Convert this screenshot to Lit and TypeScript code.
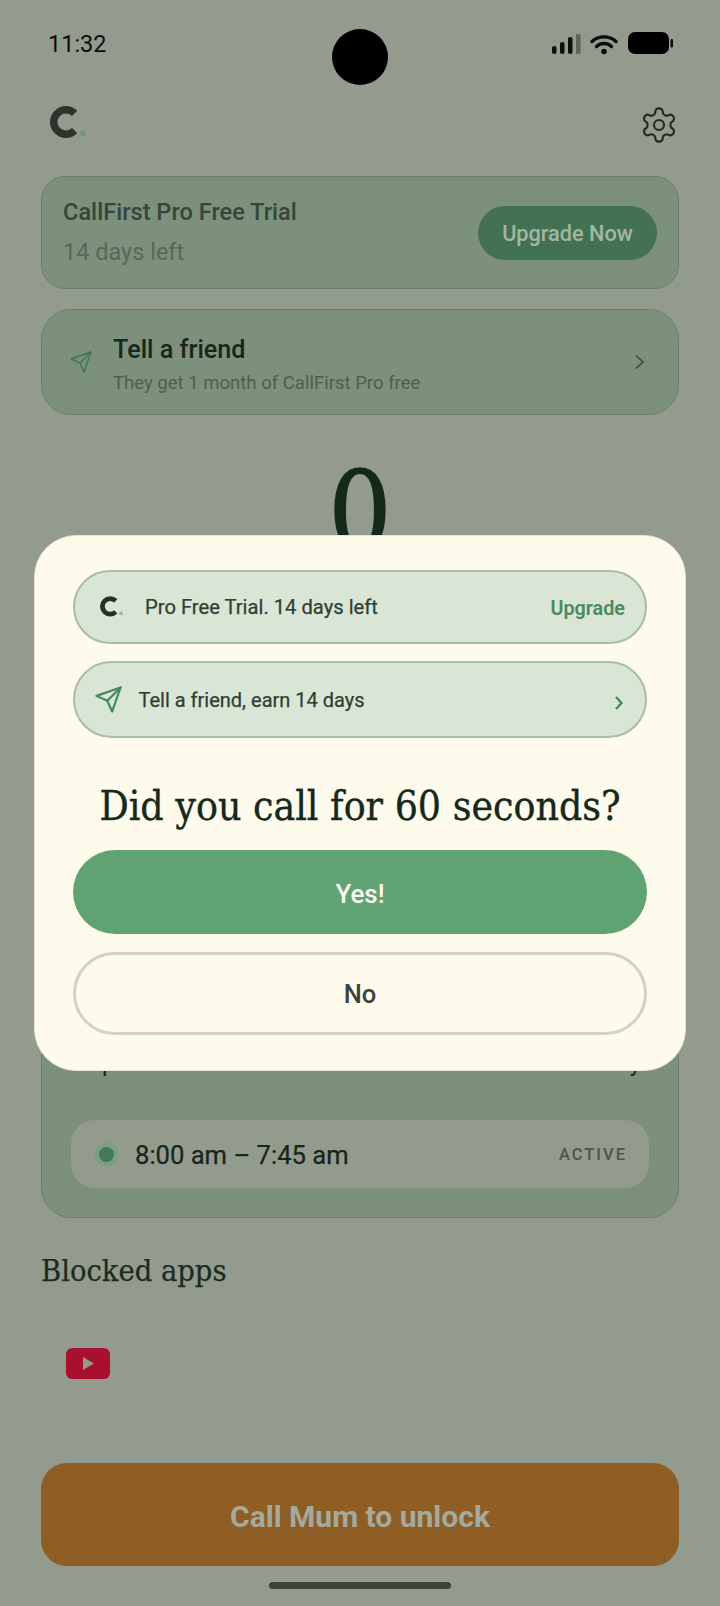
import { LitElement, html, css, svg } from 'lit';
import { customElement } from 'lit/decorators.js';

const logo = (cls: string, dot: string) => html`
  <svg class=${cls} viewBox="0 0 36 34" fill="none">
    <path d="M24.66 7.34A12.25 12.25 0 1 0 24.66 24.66" stroke="currentColor" stroke-width="7.5"></path>
    <circle cx="33" cy="27" r="3" fill=${dot}></circle>
  </svg>
`;

const sendIcon = (cls: string, width: number) => html`
  <svg class=${cls} viewBox="0 0 24 24" fill="none" stroke="currentColor" stroke-width=${width} stroke-linejoin="round" stroke-linecap="round">
    ${svg`<path d="m22 2-7 20-4-9-9-4Z"></path><path d="M22 2 11 13"></path>`}
  </svg>
`;

@customElement('app-root')
export class AppRoot extends LitElement {
  static styles = css`
    :host {
      display: block;
      width: 720px;
      height: 1606px;
      font-family: Roboto, "Noto Sans", sans-serif;
    }

    .screen {
      position: relative;
      box-sizing: border-box;
      width: 720px;
      height: 1606px;
      padding: 31px 41px 0;
      display: flex;
      flex-direction: column;
      overflow: hidden;
      background: #939b8e;
    }

    .screen > * {
      flex: none;
    }

    .camera {
      position: absolute;
      left: 332px;
      top: 29px;
      width: 56px;
      height: 56px;
      border-radius: 50%;
      background: #000;
    }

    .status {
      height: 24px;
      padding: 0 6px 0 7px;
      display: flex;
      align-items: center;
      justify-content: space-between;
    }

    .time {
      padding-top: 2px;
      font-size: 23.5px;
      line-height: 24px;
      color: #0a0d0a;
    }

    .status-icons {
      width: 121px;
      height: 24px;
      display: block;
    }

    .header {
      margin-top: 50px;
      height: 40px;
      padding: 0 0 0 9px;
      display: flex;
      align-items: center;
      justify-content: space-between;
      color: #2c352d;
    }

    .logo {
      width: 36px;
      height: 34px;
      display: block;
      margin-top: -4px;
    }

    .gear {
      width: 40px;
      height: 40px;
      color: #222b24;
    }

    .card {
      box-sizing: border-box;
      border: 1px solid #6b8068;
      background: #7d907b;
    }

    .trial {
      margin-top: 31px;
      height: 113px;
      border-radius: 24px;
      padding: 0 21px;
      display: flex;
      align-items: center;
      justify-content: space-between;
    }

    .trial-text {
      padding-bottom: 2px;
    }

    .trial-title {
      font-size: 23.6px;
      line-height: 30px;
      font-weight: 500;
      color: #36463a;
    }

    .trial-left {
      margin-top: 10px;
      font-size: 23.5px;
      line-height: 30px;
      color: #55695a;
    }

    .upgrade-now {
      width: 179px;
      height: 54px;
      border-radius: 27px;
      padding-top: 2px;
      box-sizing: border-box;
      display: flex;
      align-items: center;
      justify-content: center;
      font-size: 21.7px;
      font-weight: 500;
      color: #a4b6a4;
      background: #427252;
    }

    .friend {
      margin-top: 20px;
      height: 106px;
      border-radius: 30px;
      padding: 0 31px 0 27px;
      display: flex;
      align-items: center;
      gap: 20px;
    }

    .friend-icon {
      width: 24px;
      height: 24px;
      color: #3f7550;
      flex: none;
    }

    .friend-text {
      flex: 1;
      padding-top: 6px;
    }

    .friend-title {
      font-size: 25.2px;
      line-height: 30px;
      font-weight: 500;
      color: #16281b;
    }

    .friend-sub {
      margin-top: 6px;
      font-size: 18.55px;
      line-height: 24px;
      color: #4e5f51;
    }

    .chevron {
      width: 14px;
      height: 18px;
      flex: none;
      color: #3c4c3e;
    }

    .count {
      margin-top: 37px;
      height: 113px;
      text-align: center;
      font-family: "DejaVu Serif", serif;
      font-stretch: condensed;
      font-size: 110px;
      line-height: 120px;
      -webkit-text-stroke: 1.5px #14291a;
      color: #14291a;
    }

    /* most of this card sits behind the dialog */
    .schedule {
      margin-top: 20px;
      height: 633px;
      border-radius: 30px;
      padding: 0 29px 29px;
      display: flex;
      flex-direction: column;
      justify-content: flex-end;
    }

    .peek {
      display: flex;
      justify-content: space-between;
      padding: 0 8px 0 31px;
      font-size: 24px;
      line-height: 30px;
      margin-bottom: 42px;
      color: #14291a;
    }

    .window {
      height: 68px;
      border-radius: 24px;
      padding: 0 22px 0 24px;
      display: flex;
      align-items: center;
      background: #939b8d;
    }

    .dot {
      box-sizing: border-box;
      width: 23px;
      height: 23px;
      border-radius: 50%;
      border: 4.5px solid #76a07f;
      background: #437a55;
      flex: none;
    }

    .window-time {
      margin-left: 17px;
      padding-top: 2px;
      flex: 1;
      font-size: 25.6px;
      -webkit-text-stroke: 0.25px #15271a;
      color: #15271a;
    }

    .active {
      font-size: 16.5px;
      font-weight: 500;
      letter-spacing: 2px;
      color: #48564b;
    }

    .blocked {
      margin-top: 35px;
      font-family: "DejaVu Serif", serif;
      font-stretch: condensed;
      font-size: 30.5px;
      line-height: 36px;
      -webkit-text-stroke: 0.25px #1b2c1f;
      color: #1b2c1f;
    }

    .yt {
      margin: 59px 0 0 25px;
      width: 44px;
      height: 32px;
      display: block;
    }

    .call {
      box-sizing: border-box;
      margin-top: 83px;
      height: 103px;
      border-radius: 26px;
      padding-top: 3px;
      display: flex;
      align-items: center;
      justify-content: center;
      font-size: 30px;
      font-weight: 700;
      color: #a3aa9e;
      background: #8e5e25;
    }

    .home-bar {
      margin: 16px auto 0;
      width: 182px;
      height: 7px;
      border-radius: 4px;
      background: #3c443a;
    }

    .dialog {
      position: absolute;
      left: 34px;
      top: 535px;
      box-sizing: border-box;
      width: 652px;
      height: 536px;
      padding: 34px 38px 35px;
      border: 1px solid #e9e5d3;
      border-radius: 42px;
      display: flex;
      flex-direction: column;
      background: #fefaec;
    }

    .pill {
      box-sizing: border-box;
      border: 2px solid #a9bda2;
      background: #d9e6d5;
      display: flex;
      align-items: center;
      color: #2f3e33;
      -webkit-text-stroke: 0.25px #2f3e33;
    }

    .pill-trial {
      height: 74px;
      border-radius: 37px;
      padding: 0 20px 0 25px;
      font-size: 20.2px;
    }

    .pill-logo {
      width: 23px;
      height: 22px;
      flex: none;
      color: #2a2f2b;
    }

    .pill-trial span {
      margin-left: 22px;
      flex: 1;
    }

    .pill-trial b {
      font-size: 19.8px;
      font-weight: 600;
      padding-top: 2px;
      -webkit-text-stroke: 0;
      color: #4a8a60;
    }

    .pill-friend {
      margin-top: 17px;
      height: 77px;
      border-radius: 38.5px;
      padding: 0 21px 0 18.5px;
      font-size: 20px;
    }

    .pill-send {
      width: 29px;
      height: 29px;
      flex: none;
      color: #438a5c;
    }

    .pill-friend span {
      margin-left: 16px;
      flex: 1;
    }

    .pill-chevron {
      width: 10px;
      height: 16px;
      margin-top: 6px;
      flex: none;
      color: #4a8a60;
    }

    h1 {
      margin: 44px 0 20px;
      font-family: "DejaVu Serif", serif;
      font-stretch: condensed;
      font-size: 40.6px;
      line-height: 48px;
      font-weight: 400;
      text-align: center;
      white-space: nowrap;
      -webkit-text-stroke: 0.35px #14291a;
      color: #14291a;
    }

    .yes, .no {
      box-sizing: border-box;
      display: flex;
      align-items: center;
      justify-content: center;
    }

    .yes {
      height: 84px;
      border-radius: 42px;
      padding-top: 3px;
      font-size: 26px;
      font-weight: 500;
      color: #fefaf0;
      background: #5fa373;
    }

    .no {
      margin-top: 18px;
      height: 83px;
      border-radius: 41.5px;
      padding-top: 1px;
      border: 3px solid #d6d1bf;
      font-size: 25.5px;
      font-weight: 500;
      color: #3a443c;
    }
  `;

  render() {
    return html`
      <div class="screen">
        <div class="camera"></div>

        <div class="status">
          <div class="time">11:32</div>
          <svg class="status-icons" viewBox="0 0 121 24">
            <rect x="0" y="15" width="4.5" height="8" rx="2" fill="#0a0d0a"></rect>
            <rect x="8" y="11" width="4.5" height="12" rx="2" fill="#0a0d0a"></rect>
            <rect x="16" y="6" width="4.5" height="17" rx="2" fill="#0a0d0a"></rect>
            <rect x="24" y="3" width="4.5" height="20" rx="1" fill="#5d655c"></rect>
            <path d="M40 10.5a18 18 0 0 1 24 0M44.5 15.5a11 11 0 0 1 15 0" fill="none" stroke="#0a0d0a" stroke-width="3.4" stroke-linecap="round"></path>
            <circle cx="52" cy="20.5" r="2.8" fill="#0a0d0a"></circle>
            <rect x="76" y="1" width="41" height="22" rx="7" fill="#000"></rect>
            <rect x="118.5" y="8" width="2.5" height="8.5" rx="1" fill="#0a0d0a"></rect>
          </svg>
        </div>

        <div class="header">
          ${logo('logo', '#74967c')}
          <svg class="gear" viewBox="0 0 24 24" fill="none" stroke="currentColor" stroke-width="1.3" stroke-linejoin="round">
            <path d="M12.22 2h-.44a2 2 0 0 0-2 2v.18a2 2 0 0 1-1 1.73l-.43.25a2 2 0 0 1-2 0l-.15-.08a2 2 0 0 0-2.73.73l-.22.38a2 2 0 0 0 .73 2.73l.15.1a2 2 0 0 1 1 1.72v.51a2 2 0 0 1-1 1.74l-.15.09a2 2 0 0 0-.73 2.73l.22.38a2 2 0 0 0 2.73.73l.15-.08a2 2 0 0 1 2 0l.43.25a2 2 0 0 1 1 1.73V20a2 2 0 0 0 2 2h.44a2 2 0 0 0 2-2v-.18a2 2 0 0 1 1-1.73l.43-.25a2 2 0 0 1 2 0l.15.08a2 2 0 0 0 2.73-.73l.22-.39a2 2 0 0 0-.73-2.73l-.15-.08a2 2 0 0 1-1-1.74v-.5a2 2 0 0 1 1-1.74l.15-.09a2 2 0 0 0 .73-2.73l-.22-.38a2 2 0 0 0-2.73-.73l-.15.08a2 2 0 0 1-2 0l-.43-.25a2 2 0 0 1-1-1.73V4a2 2 0 0 0-2-2z"></path>
            <circle cx="12" cy="12" r="3"></circle>
          </svg>
        </div>

        <div class="card trial">
          <div class="trial-text">
            <div class="trial-title">CallFirst Pro Free Trial</div>
            <div class="trial-left">14 days left</div>
          </div>
          <div class="upgrade-now">Upgrade Now</div>
        </div>

        <div class="card friend">
          ${sendIcon('friend-icon', 1.4)}
          <div class="friend-text">
            <div class="friend-title">Tell a friend</div>
            <div class="friend-sub">They get 1 month of CallFirst Pro free</div>
          </div>
          <svg class="chevron" viewBox="0 0 14 18" fill="none" stroke="currentColor" stroke-width="1.7">
            <path d="M3 2.5 10 9l-7 6.5"></path>
          </svg>
        </div>

        <div class="count">0</div>

        <div class="card schedule">
          <div class="peek"><span>p</span><span>y</span></div>
          <div class="window">
            <div class="dot"></div>
            <div class="window-time">8:00 am – 7:45 am</div>
            <div class="active">ACTIVE</div>
          </div>
        </div>

        <div class="blocked">Blocked apps</div>

        <svg class="yt" viewBox="0 0 44 32">
          <rect width="44" height="31" rx="6" fill="#a91030"></rect>
          <path d="M17 9l11 6.5-11 6.5z" fill="#939b8e"></path>
        </svg>

        <div class="call">Call Mum to unlock</div>
        <div class="home-bar"></div>

        <div class="dialog">
          <div class="pill pill-trial">
            ${logo('pill-logo', '#a8b3a5')}
            <span>Pro Free Trial. 14 days left</span>
            <b>Upgrade</b>
          </div>
          <div class="pill pill-friend">
            ${sendIcon('pill-send', 1.8)}
            <span>Tell a friend, earn 14 days</span>
            <svg class="pill-chevron" viewBox="0 0 10 16" fill="none" stroke="currentColor" stroke-width="2.4">
              <path d="M2 2l5.5 6L2 14"></path>
            </svg>
          </div>
          <h1>Did you call for 60 seconds?</h1>
          <div class="yes">Yes!</div>
          <div class="no">No</div>
        </div>
      </div>
    `;
  }
}
